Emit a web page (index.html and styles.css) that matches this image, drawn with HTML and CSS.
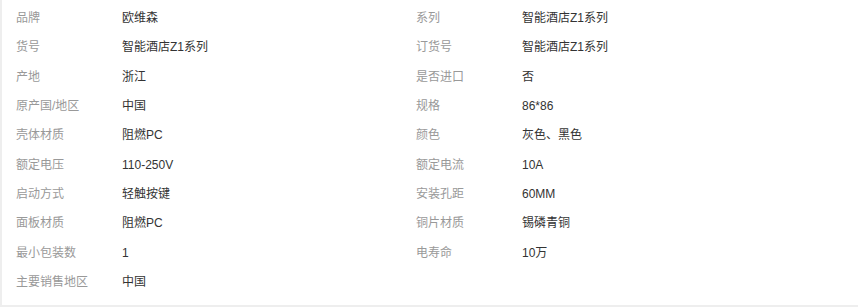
FILE: index.html
```html
<!DOCTYPE html>
<html lang="zh">
<head>
<meta charset="utf-8">
<link rel="stylesheet" href="styles.css">
</head>
<body>
<div class="panel">
  <div class="attrs">
    <div class="k">品牌</div><div class="v">欧维森</div><div class="k">系列</div><div class="v">智能酒店Z1系列</div>
    <div class="k">货号</div><div class="v">智能酒店Z1系列</div><div class="k">订货号</div><div class="v">智能酒店Z1系列</div>
    <div class="k">产地</div><div class="v">浙江</div><div class="k">是否进口</div><div class="v">否</div>
    <div class="k">原产国/地区</div><div class="v">中国</div><div class="k">规格</div><div class="v">86*86</div>
    <div class="k">壳体材质</div><div class="v">阻燃PC</div><div class="k">颜色</div><div class="v">灰色、黑色</div>
    <div class="k">额定电压</div><div class="v">110-250V</div><div class="k">额定电流</div><div class="v">10A</div>
    <div class="k">启动方式</div><div class="v">轻触按键</div><div class="k">安装孔距</div><div class="v">60MM</div>
    <div class="k">面板材质</div><div class="v">阻燃PC</div><div class="k">铜片材质</div><div class="v">锡磷青铜</div>
    <div class="k">最小包装数</div><div class="v">1</div><div class="k">电寿命</div><div class="v">10万</div>
    <div class="k">主要销售地区</div><div class="v">中国</div><div class="k"></div><div class="v"></div>
  </div>
</div>
</body>
</html>
```

FILE: styles.css
```css
html, body {
  margin: 0;
  padding: 0;
  background: #eeeeee;
}
body {
  font-family: "Liberation Sans", Arial, "Noto Sans CJK SC", sans-serif;
  font-size: 12px;
}
.panel {
  margin-left: 2px;
  height: 305px;
  background: #ffffff;
  box-sizing: border-box;
  padding: 3.5px 0 0 14px;
}
.attrs {
  display: grid;
  grid-template-columns: 106px 294px 106px 1fr;
  grid-auto-rows: 29.33px;
  align-items: center;
}
.k {
  color: #999999;
  line-height: 16px;
  white-space: nowrap;
}
.v {
  color: #333333;
  line-height: 16px;
  white-space: nowrap;
}
```
